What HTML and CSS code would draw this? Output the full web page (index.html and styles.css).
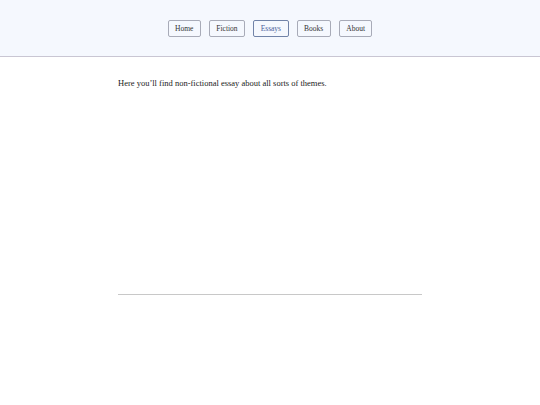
FILE: index.html
```html
<!DOCTYPE html>
<html>
<head>
<meta charset="utf-8">
<link rel="stylesheet" href="styles.css">
</head>
<body>
<header class="site-header">
  <nav class="nav">
    <a class="nav-btn" href="#">Home</a>
    <a class="nav-btn" href="#">Fiction</a>
    <a class="nav-btn active" href="#">Essays</a>
    <a class="nav-btn" href="#">Books</a>
    <a class="nav-btn" href="#">About</a>
  </nav>
</header>
<main class="content">
  <p class="intro">Here you’ll find non-fictional essay about all sorts of themes.</p>
  <hr class="rule">
</main>
</body>
</html>
```
FILE: styles.css
```css
html, body {
  margin: 0;
  padding: 0;
  background: #ffffff;
  font-family: "Liberation Serif", serif;
  color: #222;
}
.site-header {
  height: 56px;
  background: #f5f8fe;
  border-bottom: 1px solid #c9c6d3;
  display: flex;
  align-items: center;
  justify-content: center;
}
.nav {
  display: flex;
  gap: 8px;
}
.nav-btn {
  display: block;
  height: 15px;
  line-height: 15px;
  padding: 0 6.5px;
  border: 1px solid #a8abb8;
  border-radius: 2px;
  font-size: 7.5px;
  color: #333;
  text-decoration: none;
}
.nav-btn.active {
  border-color: #7183a8;
  color: #4a5e9a;
}
.content {
  width: 304px;
  margin: 0 auto;
  padding-top: 20px;
}
.intro {
  margin: 0;
  font-size: 8.5px;
  line-height: 12px;
}
.rule {
  margin: 205px 0 0;
  border: 0;
  border-top: 1px solid #c8c8c8;
}
```
